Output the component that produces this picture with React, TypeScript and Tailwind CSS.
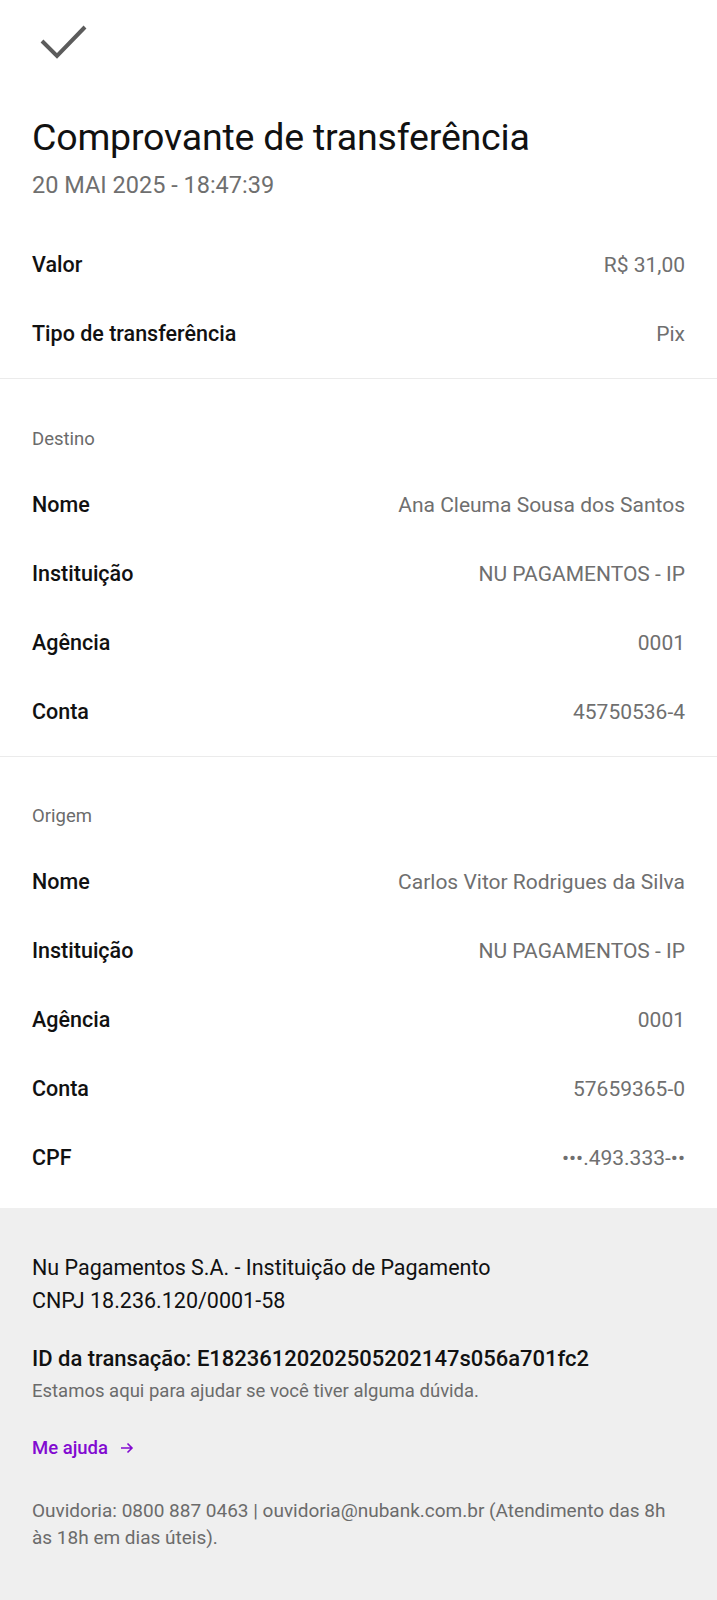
import React from "react";

const Row = ({ label, value, h = "h-[69px]" }: { label: string; value: string; h?: string }) => (
  <div className={`flex items-center justify-between ${h}`}>
    <span className="text-[21.5px] font-medium text-[#111111]">{label}</span>
    <span className="text-[21px] font-normal text-[#6f6f6f]">{value}</span>
  </div>
);

export default function App() {
  return (
    <div className="min-h-[1600px] flex flex-col bg-white" style={{ fontFamily: "Roboto, 'Liberation Sans', sans-serif" }}>
      <div className="px-8">
        <div className="h-[72px] relative">
          <svg width="717" height="72" className="absolute -left-8 top-0" viewBox="0 0 717 72">
            <polyline points="42,41 57,56 85,27" fill="none" stroke="#5c5c5c" strokeWidth="4" />
          </svg>
        </div>
        <h1 className="mt-[43px] text-[37.5px] leading-[44px] font-normal text-[#111111] tracking-[-0.2px]">Comprovante de transferência</h1>
        <div className="mt-[11px] text-[23.5px] leading-[30px] text-[#6f6f6f]">20 MAI 2025 - 18:47:39</div>
        <div className="mt-[31px] pb-[9px]">
          <Row label="Valor" value="R$ 31,00" />
          <Row label="Tipo de transferência" value="Pix" />
        </div>
      </div>
      <div className="h-px bg-[#ebebeb]" />
      <div className="px-8 pb-[9px]">
        <div className="mt-[48px] text-[18.5px] leading-[24px] text-[#6b6b6b]">Destino</div>
        <div className="mt-[20px]">
          <Row label="Nome" value="Ana Cleuma Sousa dos Santos" />
          <Row label="Instituição" value="NU PAGAMENTOS - IP" />
          <Row label="Agência" value="0001" />
          <Row label="Conta" value="45750536-4" />
        </div>
      </div>
      <div className="h-px bg-[#ebebeb]" />
      <div className="px-8 pb-[15px]">
        <div className="mt-[47px] text-[18.5px] leading-[24px] text-[#6b6b6b]">Origem</div>
        <div className="mt-[20px]">
          <Row label="Nome" value="Carlos Vitor Rodrigues da Silva" />
          <Row label="Instituição" value="NU PAGAMENTOS - IP" />
          <Row label="Agência" value="0001" />
          <Row label="Conta" value="57659365-0" />
          <Row label="CPF" value="•••.493.333-••" />
        </div>
      </div>
      <div className="flex-1 bg-[#efefef] px-8 pt-[43px] pb-12">
        <div className="text-[21.5px] leading-[33px] text-[#111111]">Nu Pagamentos S.A. - Instituição de Pagamento</div>
        <div className="text-[21.5px] leading-[33px] text-[#111111]">CNPJ 18.236.120/0001-58</div>
        <div className="mt-[25px] text-[22px] leading-[33px] font-medium text-[#111111]">ID da transação: E18236120202505202147s056a701fc2</div>
        <div className="mt-[3px] text-[18.5px] leading-[26px] text-[#6b6b6b]">Estamos aqui para ajudar se você tiver alguma dúvida.</div>
        <div className="mt-[31px] flex items-center gap-[12px] text-[18.5px] leading-[26px] font-medium text-[#820ad1]">
          <span>Me ajuda</span>
          <svg width="14" height="14" viewBox="0 0 14 14" fill="none" stroke="#820ad1" strokeWidth="1.6">
            <path d="M1 7h11M7.5 2.5L12 7l-4.5 4.5" />
          </svg>
        </div>
        <div className="mt-[36px] text-[19px] leading-[27px] text-[#6b6b6b]">
          Ouvidoria: 0800 887 0463 | ouvidoria@nubank.com.br (Atendimento das 8h às 18h em dias úteis).
        </div>
      </div>
    </div>
  );
}
